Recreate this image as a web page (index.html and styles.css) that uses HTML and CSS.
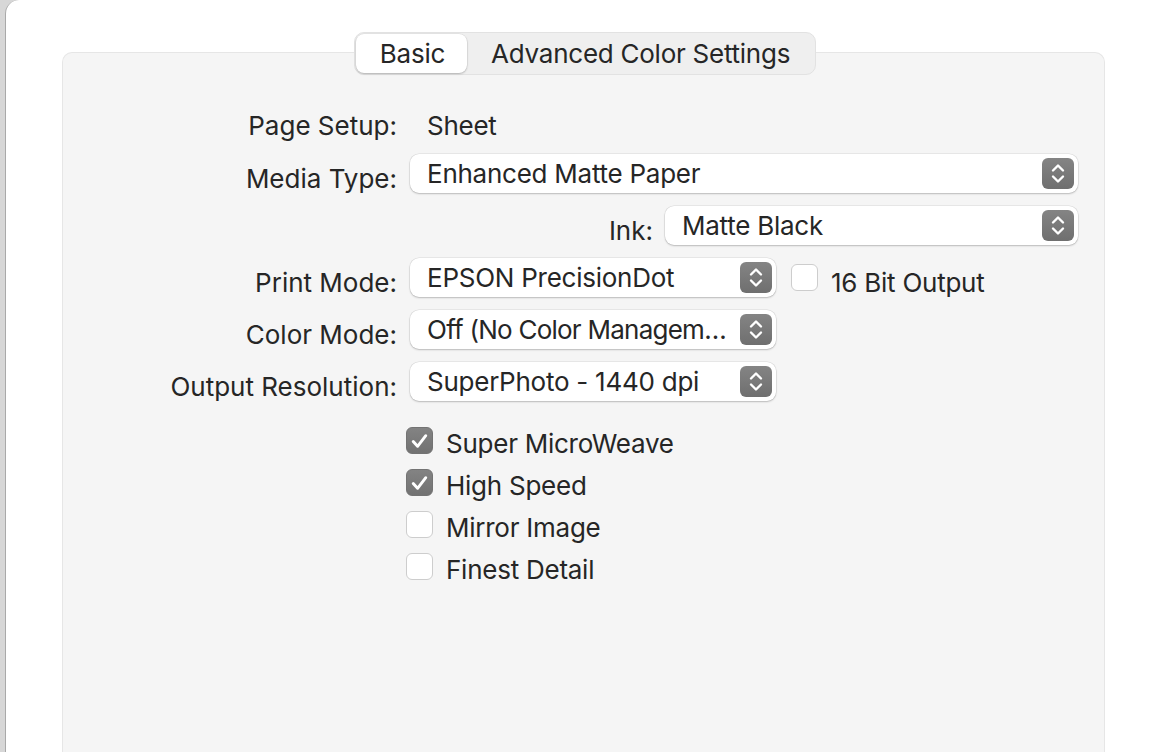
FILE: index.html
```html
<!DOCTYPE html>
<html lang="en">
<head>
<meta charset="utf-8">
<title>Print Settings</title>
<link rel="stylesheet" href="styles.css">
</head>
<body>
<div class="window">
  <div class="tabs">
    <div class="seg">
      <div class="tab sel">Basic</div>
      <div class="tab">Advanced Color Settings</div>
    </div>
  </div>
  <div class="panel">
    <div class="form">
      <div class="label first">Page Setup:</div>
      <div class="value">Sheet</div>

      <div class="label">Media Type:</div>
      <div class="popup wide"><span class="ptext">Enhanced Matte Paper</span><span class="stepper"><svg viewBox="0 0 32 31" width="32" height="31"><path d="M11 12.5 L16 7.5 L21 12.5 M11 18.5 L16 23.5 L21 18.5" fill="none" stroke="#fff" stroke-width="2.4" stroke-linecap="round" stroke-linejoin="round"/></svg></span></div>

      <div class="inkrow">
        <div class="label">Ink:</div>
        <div class="popup ink"><span class="ptext">Matte Black</span><span class="stepper"><svg viewBox="0 0 32 31" width="32" height="31"><path d="M11 12.5 L16 7.5 L21 12.5 M11 18.5 L16 23.5 L21 18.5" fill="none" stroke="#fff" stroke-width="2.4" stroke-linecap="round" stroke-linejoin="round"/></svg></span></div>
      </div>

      <div class="label">Print Mode:</div>
      <div class="ctlrow">
        <div class="popup short"><span class="ptext">EPSON PrecisionDot</span><span class="stepper"><svg viewBox="0 0 32 31" width="32" height="31"><path d="M11 12.5 L16 7.5 L21 12.5 M11 18.5 L16 23.5 L21 18.5" fill="none" stroke="#fff" stroke-width="2.4" stroke-linecap="round" stroke-linejoin="round"/></svg></span></div>
        <span class="box"></span>
        <span class="clabel">16 Bit Output</span>
      </div>

      <div class="label">Color Mode:</div>
      <div class="popup short"><span class="ptext tight">Off (No Color Managem…</span><span class="stepper"><svg viewBox="0 0 32 31" width="32" height="31"><path d="M11 12.5 L16 7.5 L21 12.5 M11 18.5 L16 23.5 L21 18.5" fill="none" stroke="#fff" stroke-width="2.4" stroke-linecap="round" stroke-linejoin="round"/></svg></span></div>

      <div class="label">Output Resolution:</div>
      <div class="popup short"><span class="ptext">SuperPhoto - 1440 dpi</span><span class="stepper"><svg viewBox="0 0 32 31" width="32" height="31"><path d="M11 12.5 L16 7.5 L21 12.5 M11 18.5 L16 23.5 L21 18.5" fill="none" stroke="#fff" stroke-width="2.4" stroke-linecap="round" stroke-linejoin="round"/></svg></span></div>

      <div class="checks">
        <div class="check"><span class="box on"><svg viewBox="0 0 28 28" width="28" height="28"><path d="M7.5 14.5 L12 19.5 L20.5 8.5" fill="none" stroke="#fff" stroke-width="3" stroke-linecap="round" stroke-linejoin="round"/></svg></span><span class="clabel">Super MicroWeave</span></div>
        <div class="check"><span class="box on"><svg viewBox="0 0 28 28" width="28" height="28"><path d="M7.5 14.5 L12 19.5 L20.5 8.5" fill="none" stroke="#fff" stroke-width="3" stroke-linecap="round" stroke-linejoin="round"/></svg></span><span class="clabel">High Speed</span></div>
        <div class="check"><span class="box"></span><span class="clabel">Mirror Image</span></div>
        <div class="check"><span class="box"></span><span class="clabel">Finest Detail</span></div>
      </div>
    </div>
  </div>
</div>
</body>
</html>
```

FILE: styles.css
```css
html, body {
  margin: 0;
  padding: 0;
  height: 100%;
  overflow: hidden;
}
body {
  background: #d7d7d7;
  font-family: Inter, "Liberation Sans", sans-serif;
  font-size: 26px;
  color: #262626;
}
.window {
  margin-left: 5px;
  height: 100%;
  box-sizing: border-box;
  background: #ffffff;
  border-left: 1px solid #a9a9a9;
  border-top-left-radius: 14px;
  display: flex;
  flex-direction: column;
}
.tabs {
  margin-left: 56px;
  width: 1043px;
  padding-top: 32px;
  margin-bottom: -23px;
  display: flex;
  justify-content: center;
  position: relative;
  z-index: 2;
}
.seg {
  display: flex;
  height: 43px;
  box-sizing: border-box;
  background: #efefef;
  border: 1px solid #e2e2e2;
  border-radius: 10px;
  padding: 1px;
  margin-left: 3px;
}
.tab {
  height: 39px;
  line-height: 39px;
  padding: 0 24px;
  border-radius: 8px;
  letter-spacing: -0.25px;
}
.tab.sel {
  padding: 0 22px 0 24px;
  background: #ffffff;
  box-shadow: 0 1px 2px rgba(0,0,0,0.22), 0 0 0 0.5px rgba(0,0,0,0.08);
}
.panel {
  margin-left: 56px;
  width: 1043px;
  flex: 1;
  box-sizing: border-box;
  background: #f5f5f5;
  border: 1px solid #e6e6e6;
  border-bottom: none;
  border-radius: 10px 10px 0 0;
  padding: 49px 26px 0 0;
}
.form {
  display: grid;
  grid-template-columns: 334px 1fr;
  column-gap: 13px;
  row-gap: 13px;
  grid-auto-rows: 39px;
}
.label {
  text-align: right;
  line-height: 39px;
  padding-top: 5px;
  white-space: nowrap;
}
.label.first { padding-top: 4px; }
.value {
  line-height: 39px;
  padding-top: 4px;
  padding-left: 17px;
  letter-spacing: -0.25px;
}
.popup {
  height: 39px;
  box-sizing: border-box;
  background: #ffffff;
  border-radius: 9px;
  box-shadow: 0 1px 2px rgba(0,0,0,0.2), 0 0 0 0.5px rgba(0,0,0,0.1);
  display: flex;
  align-items: center;
  padding: 0 4px 0 17px;
}
.ptext {
  flex: 1;
  white-space: nowrap;
  margin-top: -1px;
  letter-spacing: -0.25px;
}
.ptext.tight { letter-spacing: -0.75px; }
.stepper {
  width: 32px;
  height: 31px;
  border-radius: 6px;
  background: linear-gradient(#848484, #6f6f6f);
  display: flex;
  flex: none;
}
.popup.short { width: 366px; }
.inkrow {
  grid-column: 2;
  display: flex;
  justify-content: flex-end;
  gap: 12px;
}
.inkrow .popup { width: 413px; }
.ctlrow {
  display: flex;
  align-items: center;
}
.ctlrow .box { margin-left: 15px; margin-right: 13px; }
.box {
  width: 27px;
  height: 27px;
  box-sizing: border-box;
  border-radius: 6px;
  background: #ffffff;
  border: 1px solid #cdcdcd;
  display: inline-flex;
  flex: none;
}
.box.on {
  background: linear-gradient(#838383, #727272);
  border-color: #737373;
  align-items: center;
  justify-content: center;
}
.box.on svg { margin: -1px; }
.clabel {
  padding-top: 9px;
  line-height: 31px;
  white-space: nowrap;
  letter-spacing: -0.25px;
}
.checks {
  grid-column: 2;
  margin-top: 13px;
  margin-left: -4px;
  display: flex;
  flex-direction: column;
  gap: 15px;
}
.check {
  display: flex;
  align-items: center;
  gap: 13px;
  height: 27px;
}
.check .clabel { padding-top: 6px; }
```
